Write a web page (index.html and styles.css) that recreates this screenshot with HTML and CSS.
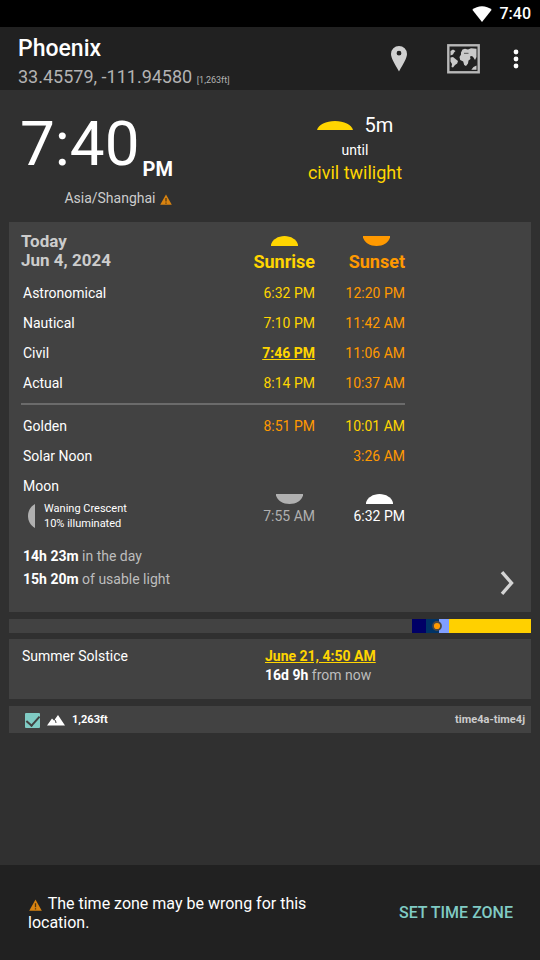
FILE: index.html
```html
<!DOCTYPE html>
<html lang="en">
<head>
<meta charset="utf-8">
<meta name="viewport" content="width=device-width, initial-scale=1">
<title>Phoenix</title>
<link rel="stylesheet" href="styles.css">
</head>
<body>
<div class="status-bar">
  <svg class="wifi" viewBox="0 0 20 16" aria-hidden="true"><path d="M10 16 0.3 3.8C3 1.4 6.300 .2 10 .2s7 1.200 9.700 3.600z"/></svg>
  <span>7:40</span>
</div>
<header class="app-bar">
  <div class="place">
    <h1>Phoenix</h1>
    <p>33.45579, -111.94580 <small>[1,263ft]</small></p>
  </div>
  <button class="icon-button pin-button" aria-label="Location">
    <svg width="16" height="26" viewBox="0 0 16 26"><path fill="#d0d0d0" fill-rule="evenodd" d="M8 0a8 8 0 0 0-8 8c0 4 3.500 9.500 8 17.500C12.500 17.500 16 12 16 8a8 8 0 0 0-8-8zm0 4.800a2.400 2.400 0 1 1 0 4.800 2.400 2.400 0 0 1 0-4.800z"/></svg>
  </button>
  <button class="icon-button map-button" aria-label="Map">
    <svg width="33" height="30" viewBox="0 0 33 30">
      <rect x="1.300" y="1.300" width="30.400" height="27" fill="#212121" stroke="#b8b8b8" stroke-width="2.400"/>
      <g fill="#cacaca">
        <path d="M3.500 7 6 5.500 8.500 7 7 8.500 6 10.500 3.500 11.500z"/>
        <path d="M3.500 13.500 6 13l2.500 2 2.500 2-.8 2.500L8 21l-2 2.500-1.500-.5.500-3-1.500-2.500z"/>
        <path d="M14 8.500 15.500 5.500 18 4.800l3 .7 3-1.200 5.500.4v8.300L28 16l-1.500-2.500L25 12l-2 .500.500 2.500-2 1.500-.5 3-2 2.500-1.800-1-1-3.500-3-1.500-.7-3 1.500-2.500z"/>
        <path d="M24.500 25.500 26.500 23l3-1.500v4.300h-5z"/>
      </g>
      <path d="M17 9.300h4.500" stroke="#555" stroke-width="1"/>
    </svg>
  </button>
  <button class="icon-button menu-button" aria-label="More options">
    <svg width="6" height="20" viewBox="0 0 6 20" fill="#fff"><circle cx="3" cy="3" r="2.400"/><circle cx="3" cy="10" r="2.400"/><circle cx="3" cy="17" r="2.400"/></svg>
  </button>
</header>
<main>
  <section class="clock-row">
    <div class="clock">
      <p class="time">7:40<span>PM</span></p>
      <p class="zone">Asia/Shanghai <svg class="warn" viewBox="0 0 12 11" aria-hidden="true"><path fill="#d98310" d="M6 .5 11.800 10.800H.2z"/><path stroke="#4d3510" stroke-width="1.200" d="M6 4v3.500M6 8.500v1.200"/></svg></p>
    </div>
    <div class="upcoming">
      <p class="remaining"><svg width="36" height="9" viewBox="0 0 36 9" aria-hidden="true"><path fill="#ffd500" d="M0 9C1.500 3.500 9 0 18 0s16.500 3.500 18 9z"/></svg><span>5m</span></p>
      <p class="until">until</p>
      <p class="event">civil twilight</p>
    </div>
  </section>

  <section class="card today">
    <table>
      <thead>
        <tr>
          <th class="date" scope="col">Today<br>Jun 4, 2024</th>
          <th class="rise" scope="col"><span class="stack"><svg class="dome" viewBox="0 0 27 10" aria-hidden="true"><path d="M0 10V8.500C1.500 3.500 7 0 13.500 0S25.500 3.500 27 8.500V10z"/></svg>Sunrise</span></th>
          <th class="set" scope="col"><span class="stack"><svg class="dome" viewBox="0 0 27 10" aria-hidden="true"><path d="M0 0v1.500C1.500 6.500 7 10 13.500 10S25.500 6.500 27 1.500V0z"/></svg>Sunset</span></th>
        </tr>
      </thead>
      <tbody>
        <tr><td>Astronomical</td><td class="rise">6:32 PM</td><td class="set">12:20 PM</td></tr>
        <tr><td>Nautical</td><td class="rise">7:10 PM</td><td class="set">11:42 AM</td></tr>
        <tr><td>Civil</td><td class="rise next">7:46 PM</td><td class="set">11:06 AM</td></tr>
        <tr><td>Actual</td><td class="rise">8:14 PM</td><td class="set">10:37 AM</td></tr>
        <tr class="divider"><td colspan="3"><hr></td></tr>
        <tr><td>Golden</td><td class="set">8:51 PM</td><td class="rise">10:01 AM</td></tr>
        <tr><td>Solar Noon</td><td></td><td class="set">3:26 AM</td></tr>
        <tr class="moon">
          <td>Moon
            <div class="phase">
              <svg width="7" height="24" viewBox="0 0 7 24" aria-hidden="true"><path fill="#b0b0b0" d="M7 0v24C2.500 21.500 0 17 0 12S2.500 2.500 7 0z"/></svg>
              <span>Waning Crescent<br>10% illuminated</span>
            </div>
          </td>
          <td class="moonset"><span class="stack"><svg class="dome" viewBox="0 0 27 10" aria-hidden="true"><path d="M0 0v1.500C1.500 6.500 7 10 13.500 10S25.500 6.500 27 1.500V0z"/></svg>7:55 AM</span></td>
          <td class="moonrise"><span class="stack"><svg class="dome" viewBox="0 0 27 10" aria-hidden="true"><path d="M0 10V8.500C1.500 3.500 7 0 13.500 0S25.500 3.500 27 8.500V10z"/></svg>6:32 PM</span></td>
        </tr>
      </tbody>
    </table>
    <div class="summary">
      <div>
        <p><b>14h 23m</b> in the day</p>
        <p><b>15h 20m</b> of usable light</p>
      </div>
      <button class="icon-button next-button" aria-label="Tomorrow">
        <svg width="14" height="24" viewBox="0 0 14 24"><path fill="none" stroke="#d4d4d4" stroke-width="3.400" d="M2 1.200l9.500 10.800L2 22.800"/></svg>
      </button>
    </div>
  </section>

  <svg class="lightmap" viewBox="0 0 522 14" role="img" aria-label="Light through the day">
    <path fill="#424242" d="M0 0h403v14H0z"/>
    <path fill="#000066" d="M403 0h14v14h-14z"/>
    <path fill="#003366" d="M417 0h13v14h-13z"/>
    <path fill="#809fff" d="M430 0h10v14h-10z"/>
    <path fill="#ffd000" d="M440 0h82v14h-82z"/>
    <circle cx="428" cy="7" r="4" fill="#ff9900" stroke="#4c4844" stroke-width="1.800"/>
  </svg>

  <section class="card solstice">
    <h2>Summer Solstice</h2>
    <div>
      <p class="next rise">June 21, 4:50 AM</p>
      <p><b>16d 9h</b> from now</p>
    </div>
  </section>

  <section class="card source">
    <label>
      <input type="checkbox" checked>
      <svg width="18" height="11" viewBox="0 0 18 11" aria-hidden="true"><path fill="#fff" d="M0 10.500 5 3.500l2 2L11 0l7 10.500z"/><path fill="none" stroke="#424242" stroke-width="1" d="M7 4.500l1.500 1L9 8"/></svg>
      <span>1,263ft</span>
    </label>
    <span class="provider">time4a-time4j</span>
  </section>
</main>
<aside class="snackbar" role="status">
  <p><svg class="warn" viewBox="0 0 12 11" aria-hidden="true"><path fill="#d98310" d="M6 .5 11.800 10.800H.2z"/><path stroke="#4d3510" stroke-width="1.200" d="M6 4v3.500M6 8.500v1.200"/></svg> The time zone may be wrong for this location.</p>
  <button>SET TIME ZONE</button>
</aside>
</body>
</html>
```
FILE: styles.css
```css
* {
  box-sizing: border-box;
}

body {
  display: flex;
  flex-direction: column;
  min-height: 100vh;
  margin: 0;
  background: #303030;
  color: #fff;
  font: 14px/20px Roboto, sans-serif;
}

h1, h2, p {
  margin: 0;
  font-weight: 400;
}

svg {
  display: block;
  flex: none;
}

button {
  border: 0;
  padding: 0;
  background: none;
  color: inherit;
  font: inherit;
}

.status-bar {
  display: flex;
  justify-content: flex-end;
  align-items: center;
  gap: 8px;
  height: 27px;
  padding-right: 9px;
  background: #000;
  font-size: 16px;
  font-weight: 500;
}

.wifi {
  width: 20px;
  height: 16px;
  fill: #fff;
}

.app-bar {
  display: flex;
  align-items: center;
  height: 63px;
  padding: 0 18px;
  background: #212121;
}

.place {
  flex: 1;
  padding-top: 12px;
}

.place h1 {
  font-size: 23px;
  font-weight: 500;
  line-height: 28px;
}

.place p {
  color: #b3b3b3;
  font-size: 18px;
  line-height: 28px;
}

.place small {
  font-size: 9px;
}

.icon-button {
  display: flex;
  justify-content: center;
  align-items: center;
}

.pin-button,
.map-button {
  width: 64px;
  height: 54px;
}

.menu-button {
  width: 13px;
  height: 54px;
  margin-left: 14px;
}

main {
  padding: 0 9px;
}

.clock-row {
  display: flex;
  height: 132px;
  padding: 18px 0 0 11px;
}

.clock {
  width: 152px;
}

.time {
  display: flex;
  align-items: flex-end;
  gap: 3px;
  font-size: 62px;
  line-height: 72px;
}

.time span {
  font-size: 20px;
  font-weight: 700;
  line-height: 22px;
}

.zone {
  margin-top: 8px;
  color: #ccc;
  text-align: right;
}

.warn {
  display: inline-block;
  width: 12px;
  height: 11px;
  vertical-align: -2px;
}

.zone .warn {
  margin-left: 1px;
}

.upcoming {
  display: flex;
  flex-direction: column;
  align-items: center;
  width: 140px;
  margin-left: 113px;
  padding-top: 4px;
}

.remaining {
  display: flex;
  align-items: center;
  gap: 12px;
  font-size: 20px;
  line-height: 26px;
}

.until {
  line-height: 24px;
}

.event {
  color: #ffd500;
  font-size: 18px;
  line-height: 22px;
}

.card {
  background: #424242;
}

.today {
  padding: 9px 12px 16px;
}

table {
  width: 384px;
  border-collapse: collapse;
  table-layout: fixed;
}

th, td {
  height: 30px;
  padding: 0;
  text-align: right;
}

th {
  height: 47px;
  font-size: 18px;
  font-weight: 700;
  vertical-align: top;
}

th:first-child {
  width: 204px;
}

td:first-child {
  padding-left: 2px;
  text-align: left;
}

.date {
  padding-top: 1px;
  color: #ccc;
  font-size: 17px;
  line-height: 19px;
  text-align: left;
}

.stack {
  display: inline-flex;
  flex-direction: column;
  align-items: center;
  vertical-align: top;
}

th .stack {
  gap: 6px;
  padding-top: 5px;
}

.dome {
  width: 27px;
  height: 10px;
  fill: currentColor;
}

.rise {
  color: #ffd500;
}

.set {
  color: #ff9900;
}

.next {
  font-weight: 700;
  text-decoration: underline;
}

.divider td {
  height: 13px;
  padding: 0 0 2px;
}

hr {
  height: 2px;
  margin: 0;
  border: 0;
  background: #6b6b6b;
}

.moon td {
  padding-top: 5px;
  vertical-align: top;
}

.moon .stack {
  gap: 2px;
  padding-top: 18px;
}

.moonset {
  color: #b0b0b0;
}

.phase {
  display: flex;
  align-items: center;
  gap: 9px;
  margin-top: 5px;
  padding-left: 5px;
  font-size: 11px;
  line-height: 15px;
}

.summary {
  display: flex;
  justify-content: space-between;
  align-items: flex-end;
  margin-top: 14px;
  padding-left: 2px;
  color: #bdbdbd;
  line-height: 23px;
}

.summary div {
  padding-bottom: 5px;
}

b {
  color: #fff;
}

.next-button {
  width: 24px;
  height: 26px;
}

.lightmap {
  width: 100%;
  height: auto;
  margin: 7px 0 6px;
}

.solstice {
  display: grid;
  grid-template-columns: 243px 1fr;
  min-height: 60px;
  padding: 8px 13px;
  color: #bdbdbd;
  line-height: 19px;
}

.solstice h2 {
  color: #fff;
  font-size: 14px;
}

.solstice .next {
  color: #ffd500;
}

.source {
  display: flex;
  justify-content: space-between;
  align-items: center;
  height: 27px;
  margin-top: 7px;
  padding: 1px 6px 0 16px;
  font-size: 11px;
  font-weight: 700;
}

.source label {
  display: flex;
  align-items: center;
  gap: 7px;
}

.source input {
  appearance: none;
  display: grid;
  justify-content: center;
  width: 15px;
  height: 15px;
  margin: 0;
  border-radius: 1px;
  background: #80cbc4;
}

.source input:checked::before {
  content: "";
  width: 6px;
  height: 11px;
  border: solid #424242;
  border-width: 0 2px 2px 0;
  transform: rotate(42deg);
}

.provider {
  color: #ccc;
}

.snackbar {
  display: flex;
  justify-content: space-between;
  align-items: center;
  min-height: 95px;
  margin-top: auto;
  padding: 0 27px 0 28px;
  background: #212121;
  font-size: 16px;
  line-height: 19px;
}

.snackbar p {
  max-width: 300px;
}

.snackbar .warn {
  width: 15px;
  height: 12px;
  margin-right: 1px;
}

.snackbar button {
  color: #80cbc4;
  font-weight: 500;
}
```
